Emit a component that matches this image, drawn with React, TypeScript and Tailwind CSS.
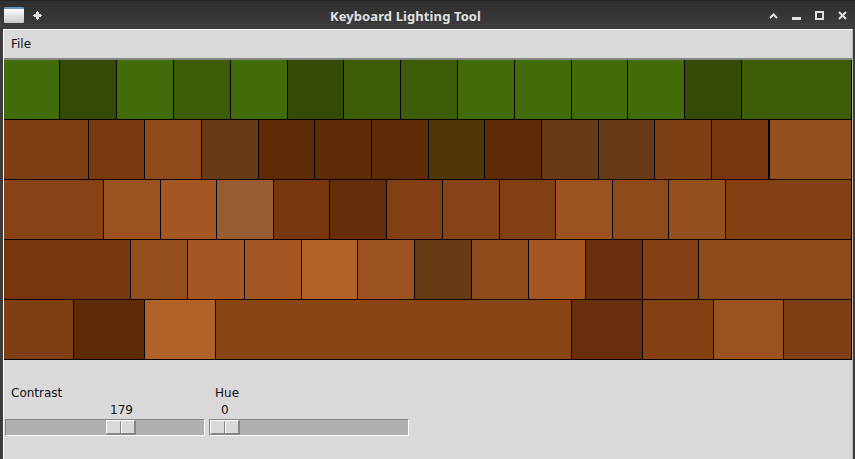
type Key = { w: string; c: string };

const rows: Key[][] = [
  [
    { w: "w-[56px]", c: "bg-[#426c0a]" },
    { w: "w-[57px]", c: "bg-[#354a06]" },
    { w: "w-[57px]", c: "bg-[#426c0a]" },
    { w: "w-[57px]", c: "bg-[#3d5c07]" },
    { w: "w-[57px]", c: "bg-[#426c0a]" },
    { w: "w-[56px]", c: "bg-[#354a06]" },
    { w: "w-[57px]", c: "bg-[#3d5c07]" },
    { w: "w-[57px]", c: "bg-[#3d5c07]" },
    { w: "w-[57px]", c: "bg-[#426c0a]" },
    { w: "w-[57px]", c: "bg-[#426c0a]" },
    { w: "w-[56px]", c: "bg-[#426c0a]" },
    { w: "w-[57px]", c: "bg-[#426c0a]" },
    { w: "w-[57px]", c: "bg-[#354a06]" },
    { w: "flex-1", c: "bg-[#3d5c07]" },
  ],
  [
    { w: "w-[85px]", c: "bg-[#7e3f15]" },
    { w: "w-[56px]", c: "bg-[#7a3a11]" },
    { w: "w-[57px]", c: "bg-[#8f4a1c]" },
    { w: "w-[57px]", c: "bg-[#673b15]" },
    { w: "w-[56px]", c: "bg-[#5f2a06]" },
    { w: "w-[57px]", c: "bg-[#5f2a06]" },
    { w: "w-[57px]", c: "bg-[#5f2a06]" },
    { w: "w-[56px]", c: "bg-[#503706]" },
    { w: "w-[57px]", c: "bg-[#5f2a06]" },
    { w: "w-[57px]", c: "bg-[#673b15]" },
    { w: "w-[56px]", c: "bg-[#673b15]" },
    { w: "w-[57px]", c: "bg-[#7e3f15]" },
    { w: "w-[58px] border-r-2", c: "bg-[#77360d]" },
    { w: "flex-1", c: "bg-[#954f1f]" },
  ],
  [
    { w: "w-[100px]", c: "bg-[#874315]" },
    { w: "w-[57px]", c: "bg-[#9c5220]" },
    { w: "w-[56px]", c: "bg-[#a55723]" },
    { w: "w-[57px]", c: "bg-[#985c33]" },
    { w: "w-[56px]", c: "bg-[#77360d]" },
    { w: "w-[57px]", c: "bg-[#662d09]" },
    { w: "w-[56px]", c: "bg-[#823f14]" },
    { w: "w-[57px]", c: "bg-[#874315]" },
    { w: "w-[56px]", c: "bg-[#823f14]" },
    { w: "w-[57px]", c: "bg-[#9c5220]" },
    { w: "w-[56px]", c: "bg-[#8f4a1c]" },
    { w: "w-[57px]", c: "bg-[#954f1f]" },
    { w: "flex-1", c: "bg-[#843f13]" },
  ],
  [
    { w: "w-[127px]", c: "bg-[#77360d]" },
    { w: "w-[57px]", c: "bg-[#954f1f]" },
    { w: "w-[57px]", c: "bg-[#a55723]" },
    { w: "w-[57px]", c: "bg-[#a55723]" },
    { w: "w-[56px]", c: "bg-[#b06229]" },
    { w: "w-[57px]", c: "bg-[#9c5220]" },
    { w: "w-[57px]", c: "bg-[#673b15]" },
    { w: "w-[57px]", c: "bg-[#8f4a1c]" },
    { w: "w-[57px]", c: "bg-[#a55723]" },
    { w: "w-[57px]", c: "bg-[#692f0a]" },
    { w: "w-[56px]", c: "bg-[#843f13]" },
    { w: "flex-1", c: "bg-[#8f4a1c]" },
  ],
  [
    { w: "w-[70px]", c: "bg-[#7e3f15]" },
    { w: "w-[71px]", c: "bg-[#5f2a06]" },
    { w: "w-[71px]", c: "bg-[#b06229]" },
    { w: "w-[356px]", c: "bg-[#8a4516]" },
    { w: "w-[71px]", c: "bg-[#692f0a]" },
    { w: "w-[71px]", c: "bg-[#843f13]" },
    { w: "w-[70px]", c: "bg-[#9c5220]" },
    { w: "flex-1", c: "bg-[#7e3f15]" },
  ],
];

function Scale({ label, value, thumb, gap }: { label: string; value: string; thumb: string; gap: string }) {
  return (
    <div className="w-[200px] flex flex-col">
      <div className="h-[18px] pl-[6px] text-[12px] leading-[16px]">{label}</div>
      <div className={`h-[16px] text-[12px] leading-[15px] ${gap}`}>{value}</div>
      <div className="h-[17px] flex border-t border-l border-t-[#858585] border-l-[#858585] border-r border-b border-r-white border-b-white bg-[#b0b0b0]">
        <div className={thumb} />
        <div className="w-[30px] h-[15px] flex bg-[#d9d9d9] border-t border-l border-t-white border-l-white border-b-2 border-r-2 border-b-[#858585] border-r-[#858585]">
          <div className="w-[14px] border-r border-r-[#858585]" />
          <div className="w-px bg-white" />
        </div>
      </div>
    </div>
  );
}

export default function App() {
  return (
    <div className="w-[855px] h-[459px] flex flex-col bg-[#3c3c3c] overflow-hidden font-['DejaVu_Sans',sans-serif]">
      {/* Title bar */}
      <div className="h-[29px] flex items-center bg-gradient-to-b from-[#2f2f2f] to-[#3e3e3e] border-t border-t-[#222222] text-[#e0e0e0]">
        <div className="w-[20px] h-[16px] ml-[4px] rounded-[1px] bg-gradient-to-b from-white to-[#c8c8c8] border-t-2 border-t-[#6a8fc4]" />
        <svg width="9" height="9" viewBox="0 0 9 9" className="ml-[9px] fill-[#e0e0e0]">
          <path d="M3 1h1V0h1v1h1v2h2v1h1v1H8v1H6v2H5v1H4V8H3V6H1V5H0V4h1V3h2z" />
        </svg>
        <div className="flex-1 text-center text-[13px] tracking-[0.1px] leading-[18px] pt-[2px] font-bold font-['Noto_Sans',sans-serif]">
          Keyboard Lighting Tool
        </div>
        <div className="flex items-center gap-[14px] pr-[8px]">
          <svg width="9" height="9" viewBox="0 0 9 9" fill="none" stroke="#e0e0e0" strokeWidth="2">
            <path d="M1 7l3.5-3.5L8 7" />
          </svg>
          <svg width="9" height="9" viewBox="0 0 9 9" fill="#e0e0e0">
            <path d="M0 6h9v3H0z" />
          </svg>
          <svg width="9" height="9" viewBox="0 0 9 9" fill="none" stroke="#e0e0e0" strokeWidth="2">
            <path d="M1 1h7v7H1z" />
          </svg>
          <svg width="9" height="9" viewBox="0 0 9 9" fill="none" stroke="#e0e0e0" strokeWidth="2">
            <path d="M1 1l7 7M8 1L1 8" />
          </svg>
        </div>
      </div>

      <div className="flex-1 ml-[3px] mr-[2px] flex flex-col border-t border-l border-t-white border-l-white border-r border-r-[#b8b8b8] bg-[#d9d9d9] text-[#111111]">
        {/* Menu */}
        <div className="h-[30px] flex items-center pl-[7px] text-[12px] border-b-2 border-b-[#858585]">File</div>

        {/* Keys */}
        {rows.map((row, i) => (
          <div key={i} className="h-[60px] flex">
            {row.map((k, j) => (
              <div key={j} className={`${k.w} ${k.c} border-b border-r border-black shrink-0`} />
            ))}
          </div>
        ))}

        {/* Scales */}
        <div className="flex gap-[4px] pl-[1px] pt-[25px]">
          <Scale label="Contrast" value="179" thumb="w-[100px]" gap="pl-[105px]" />
          <Scale label="Hue" value="0" thumb="w-0" gap="pl-[12px]" />
        </div>
      </div>
    </div>
  );
}
